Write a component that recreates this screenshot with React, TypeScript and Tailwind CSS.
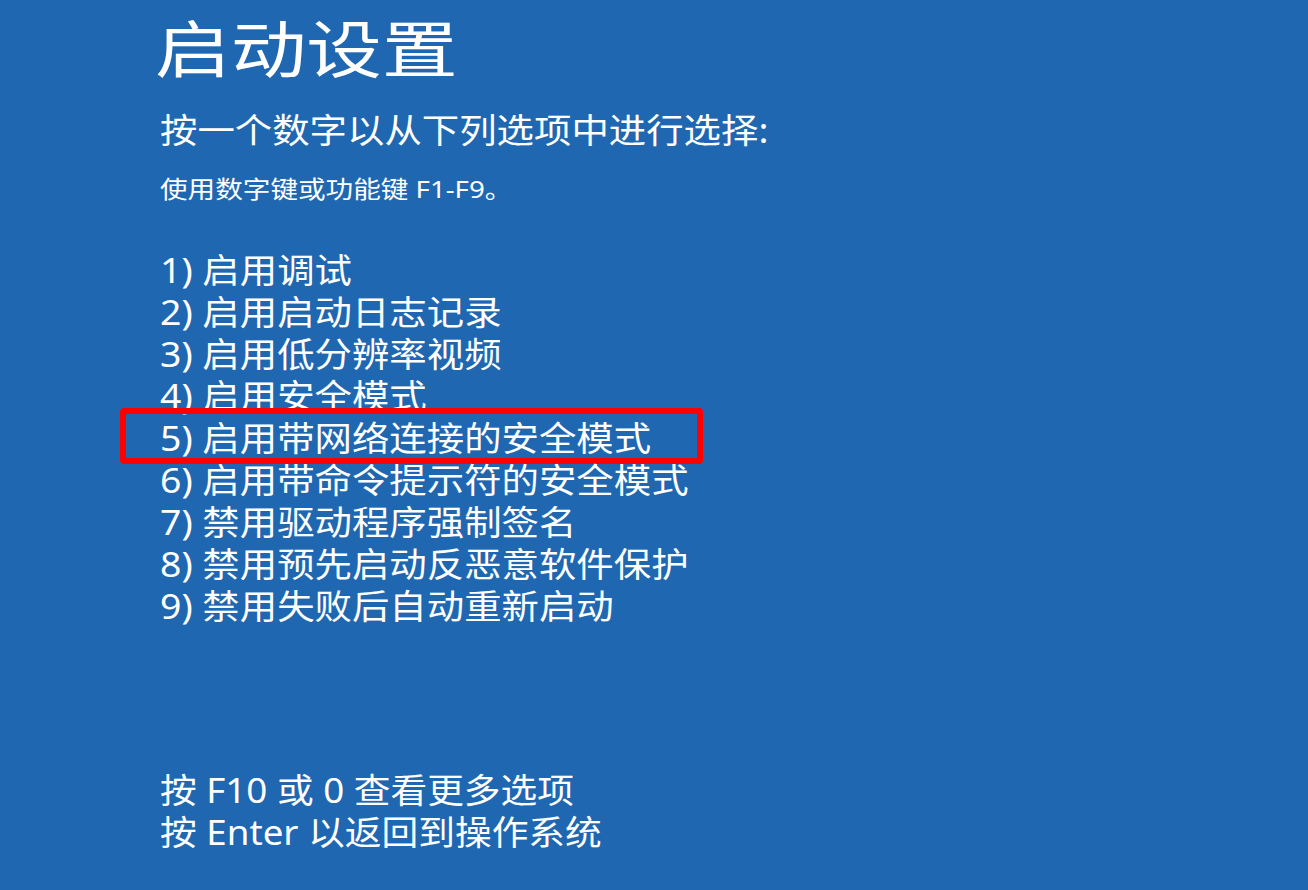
import React from 'react';

const items = [
  '1) 启用调试',
  '2) 启用启动日志记录',
  '3) 启用低分辨率视频',
  '4) 启用安全模式',
  '5) 启用带网络连接的安全模式',
  '6) 启用带命令提示符的安全模式',
  '7) 禁用驱动程序强制签名',
  '8) 禁用预先启动反恶意软件保护',
  '9) 禁用失败后自动重新启动',
];

export default function App() {
  return (
    <div
      className="h-[890px] w-full overflow-hidden bg-[#2067b2] pl-[160px] pt-[18px] text-white"
      style={{ fontFamily: '"Noto Sans", "Noto Sans CJK SC", sans-serif' }}
    >
      <h1 className="-ml-[5px] origin-left scale-x-[1.22] text-[62px] font-normal leading-none whitespace-nowrap">
        启动设置
      </h1>

      <div className="mt-[29px] origin-left scale-x-[1.1] text-[34px] leading-[42px] whitespace-nowrap">
        按一个数字以从下列选项中进行选择:
      </div>

      <div className="mt-[22px] origin-left scale-x-[1.15] text-[24px] leading-[32px] whitespace-nowrap">
        使用数字键或功能键 F1-F9。
      </div>

      <div className="mt-[44px] flex flex-col">
        {items.map((item, i) => (
          <div key={item} className="relative h-[42px]">
            {i === 4 && (
              <div className="absolute -left-[40px] -top-[9px] h-[56px] w-[583px] rounded-[4px] border-[6px] border-[#ff0000]" />
            )}
            <div className="origin-left scale-x-[1.1] text-[34px] leading-[42px] whitespace-nowrap">{item}</div>
          </div>
        ))}
      </div>

      <div className="mt-[142px] flex flex-col">
        <div className="origin-left scale-x-[1.08] text-[34px] leading-[42px] whitespace-nowrap">按 F10 或 0 查看更多选项</div>
        <div className="origin-left scale-x-[1.08] text-[34px] leading-[42px] whitespace-nowrap">按 Enter 以返回到操作系统</div>
      </div>
    </div>
  );
}
